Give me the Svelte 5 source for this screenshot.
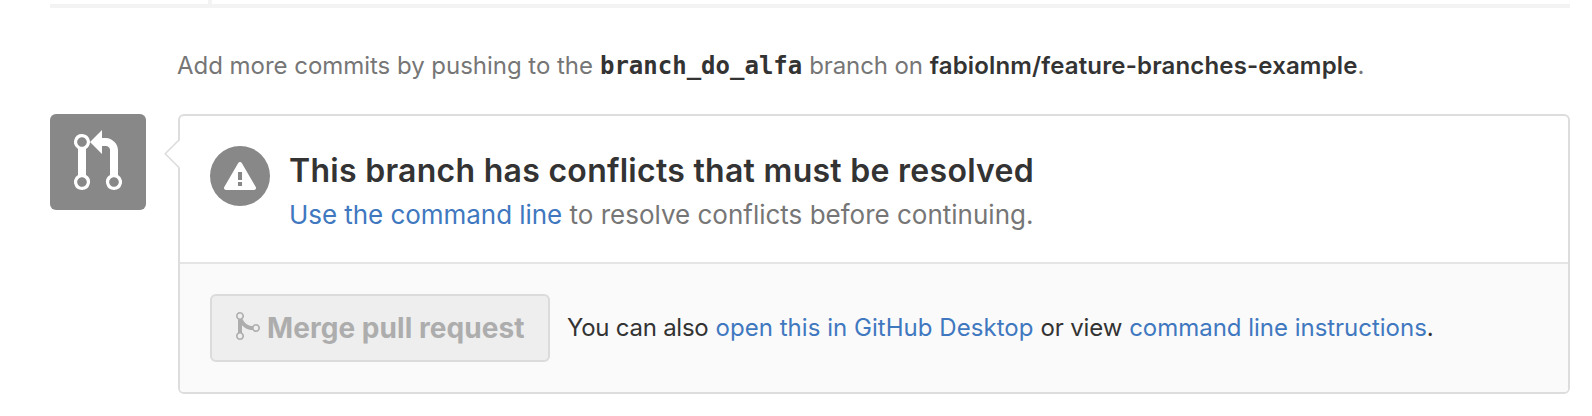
<script>
  const repo = 'fabiolnm/feature-branches-example';
  const branch = 'branch_do_alfa';
</script>

<div class="page">
  <div class="timeline-end"></div>

  <p class="push-note">
    <span class="lead">Add more commits by pushing to the</span>
    <code>{branch}</code>
    <span class="mid">branch on</span>
    <span class="tail"><strong>{repo}</strong>.</span>
  </p>

  <div class="merge">
    <div class="state-icon">
      <svg width="48" height="64" viewBox="0 0 12 16" aria-hidden="true">
        <path fill="#fff" fill-rule="evenodd" d="M11 11.28V5c-.03-.78-.34-1.47-.94-2.06C9.46 2.35 8.78 2.03 8 2H7V0L4 3l3 3V4h1c.27.02.48.11.69.31.21.2.3.42.31.69v6.28A1.993 1.993 0 0 0 10 15a1.993 1.993 0 0 0 1-3.72zm-1 2.92c-.66 0-1.2-.55-1.2-1.2 0-.65.55-1.2 1.2-1.2.65 0 1.2.55 1.2 1.2 0 .65-.55 1.2-1.2 1.2zM4 3c0-1.11-.89-2-2-2a1.993 1.993 0 0 0-1 3.72v6.56A1.993 1.993 0 0 0 2 15a1.993 1.993 0 0 0 1-3.72V4.72c.59-.34 1-.98 1-1.72zm-.8 10c0 .66-.55 1.2-1.2 1.2-.65 0-1.2-.55-1.2-1.2 0-.65.55-1.2 1.2-1.2.65 0 1.2.55 1.2 1.2zM2 4.2C1.34 4.2.8 3.65.8 3c0-.65.55-1.2 1.2-1.2.65 0 1.2.55 1.2 1.2 0 .65-.55 1.2-1.2 1.2z" />
      </svg>
    </div>

    <section class="box">
      <svg class="caret" width="16" height="30" viewBox="0 0 16 30" aria-hidden="true">
        <path fill="#fff" d="M16 1 1.5 15 16 29z" />
        <path fill="none" stroke="#ddd" stroke-width="1.6" d="M15.2 .8 1.2 14.8 15.2 28.8" />
      </svg>

      <div class="status">
        <div class="badge">
          <svg width="32" height="32" viewBox="0 0 16 16" aria-hidden="true">
            <path fill="#fff" fill-rule="evenodd" d="M8.893 1.5c-.183-.31-.52-.5-.887-.5s-.703.19-.886.5L.138 13.499a.98.98 0 0 0 0 1.001c.193.31.53.501.886.501h13.964c.367 0 .704-.19.877-.5a1.03 1.03 0 0 0 .01-1.002L8.893 1.5zm.133 11.497H6.987v-2.003h2.039v2.003zm0-3.004H6.987V5.987h2.039v4.006z" />
          </svg>
        </div>
        <div class="message">
          <h3>This branch has conflicts that must be resolved</h3>
          <p><a href="#cli">Use the command line</a> to resolve conflicts before continuing.</p>
        </div>
      </div>

      <div class="actions">
        <button disabled>
          <svg width="24" height="32" viewBox="0 0 12 16" aria-hidden="true">
            <path fill="#adadad" fill-rule="evenodd" d="M10 7c-.73 0-1.38.41-1.73 1.02V8C7.22 7.98 6 7.64 5.14 6.98c-.75-.58-1.5-1.61-1.89-2.44A1.993 1.993 0 0 0 2 .99C.89.99 0 1.89 0 3a2 2 0 0 0 1 1.72v6.56c-.59.35-1 .99-1 1.72 0 1.11.89 2 2 2a1.993 1.993 0 0 0 1-3.72V7.67c.67.7 1.44 1.27 2.3 1.69.86.42 2.03.63 2.97.64v-.02c.36.61 1 1.02 1.73 1.02 1.11 0 2-.89 2-2 0-1.11-.89-2-2-2zm-6.8 6c0 .66-.55 1.2-1.2 1.2-.65 0-1.2-.55-1.2-1.2 0-.65.55-1.2 1.2-1.2.65 0 1.2.55 1.2 1.2zM2 4.2C1.34 4.2.8 3.65.8 3c0-.65.55-1.2 1.2-1.2.65 0 1.2.55 1.2 1.2 0 .65-.55 1.2-1.2 1.2zm8 6c-.66 0-1.2-.55-1.2-1.2 0-.65.55-1.2 1.2-1.2.65 0 1.2.55 1.2 1.2 0 .65-.55 1.2-1.2 1.2z" />
          </svg>
          <span>Merge pull request</span>
        </button>
        <p>
          <span class="also">You can also</span>
          <a class="desktop" href="#desktop">open this in GitHub Desktop</a>
          <span class="or">or view</span>
          <span><a class="instructions" href="#instructions">command line instructions</a>.</span>
        </p>
      </div>
    </section>
  </div>
</div>

<style>
  :global(body) {
    margin: 0;
    background: #fff;
  }

  .page {
    box-sizing: border-box;
    width: 1592px;
    height: 416px;
    padding: 0 22px 0 50px;
    font-family: Inter, sans-serif;
    font-size: 24px;
    color: #333;
    white-space: nowrap;
    overflow: hidden;
  }

  p,
  h3 {
    margin: 0;
  }

  a {
    color: #4078c0;
    text-decoration: none;
  }

  .timeline-end {
    height: 4px;
    border-bottom: 4px solid #f3f3f3;
    background: linear-gradient(#f3f3f3, #f3f3f3) 158px 0 / 4px 4px no-repeat;
  }

  .push-note {
    display: flex;
    align-items: baseline;
    gap: 7px;
    height: 63px;
    margin-left: 127px;
    padding-top: 43px;
    line-height: 30px;
    color: #767676;
  }

  .push-note strong {
    font-weight: 600;
    letter-spacing: 0.15px;
    color: #333;
  }

  .lead {
    letter-spacing: -0.03px;
  }

  .mid {
    letter-spacing: -0.12px;
  }

  code {
    font: bold 24px/30px "DejaVu Sans Mono", monospace;
    color: #333;
  }

  .merge {
    display: flex;
    gap: 32px;
    align-items: flex-start;
  }

  .state-icon {
    display: flex;
    flex: none;
    align-items: center;
    justify-content: center;
    width: 96px;
    height: 96px;
    border-radius: 6px;
    background: #888;
  }

  .box {
    position: relative;
    flex: 1;
    box-sizing: border-box;
    height: 280px;
    border: 2px solid #ddd;
    border-radius: 6px;
  }

  .caret {
    position: absolute;
    left: -16px;
    top: 23px;
  }

  .status {
    display: flex;
    gap: 19px;
    box-sizing: border-box;
    height: 148px;
    padding: 30px;
    border-bottom: 2px solid #e5e5e5;
  }

  .badge {
    display: flex;
    flex: none;
    align-items: center;
    justify-content: center;
    width: 60px;
    height: 60px;
    border-radius: 50%;
    background: #888;
  }

  .message h3 {
    padding-top: 4px;
    font-size: 32px;
    font-weight: 600;
    line-height: 41px;
    letter-spacing: 0.28px;
  }

  .message p {
    padding-top: 4px;
    font-size: 26px;
    line-height: 40px;
    color: #767676;
  }

  .message a {
    letter-spacing: -0.05px;
  }

  .actions {
    display: flex;
    gap: 17px;
    align-items: flex-start;
    box-sizing: border-box;
    height: 128px;
    padding: 30px;
    border-radius: 0 0 4px 4px;
    background: #fafafa;
  }

  .actions p {
    display: flex;
    gap: 7px;
    padding-top: 19px;
    line-height: 30px;
  }

  button {
    display: flex;
    align-items: flex-start;
    gap: 7px;
    box-sizing: border-box;
    width: 340px;
    height: 68px;
    padding: 14px 22px 0 24px;
    border: 2px solid #dbdbdb;
    border-radius: 6px;
    background: #eee;
    font: 700 28px/36px Inter, sans-serif;
    letter-spacing: 0.06px;
    color: #adadad;
  }

  .also {
    letter-spacing: -0.25px;
  }

  .desktop {
    letter-spacing: 0.04px;
  }

  .or {
    letter-spacing: -0.15px;
  }

  .instructions {
    letter-spacing: -0.02px;
  }
</style>
